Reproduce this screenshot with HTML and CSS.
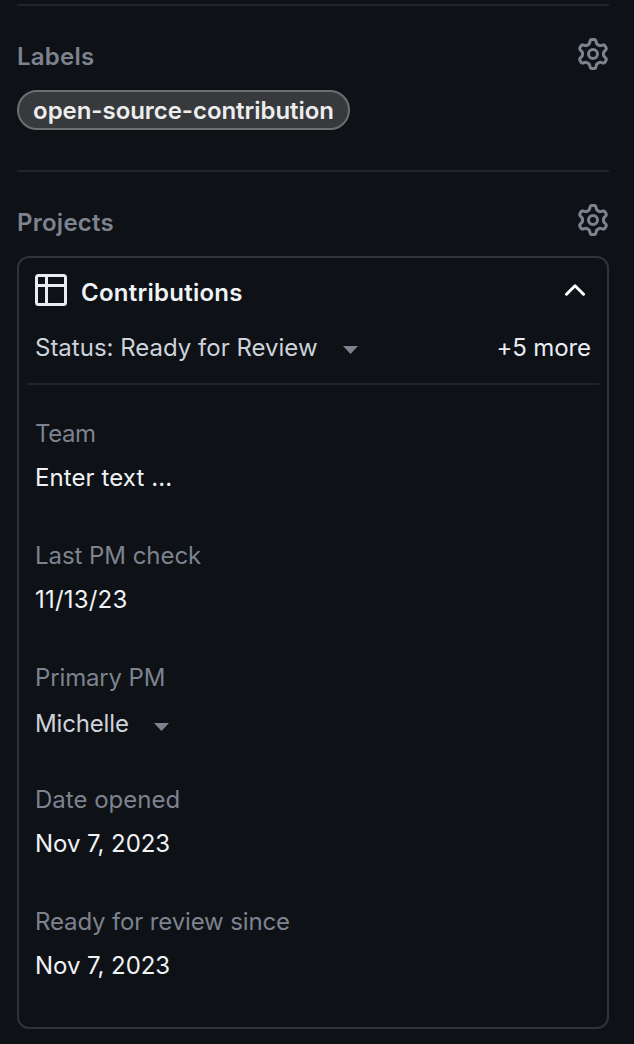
FILE: index.html
```html
<!DOCTYPE html>
<html lang="en">
<head>
<meta charset="utf-8">
<title>Sidebar</title>
<link rel="stylesheet" href="styles.css">
</head>
<body>
<svg class="sprite" aria-hidden="true">
  <symbol id="gear" viewBox="0 0 16 16"><path d="M8 0a8.2 8.2 0 0 1 .701.031C9.444.095 9.99.645 10.16 1.29l.288 1.107c.018.066.079.158.212.224.231.114.454.243.668.386.123.082.233.09.299.071l1.103-.303c.644-.176 1.392.021 1.82.63.27.385.506.792.704 1.218.315.675.111 1.422-.364 1.891l-.814.806c-.049.048-.098.147-.088.294.016.257.016.515 0 .772-.01.147.038.246.088.294l.814.806c.475.469.679 1.216.364 1.891a7.977 7.977 0 0 1-.704 1.217c-.428.61-1.176.807-1.82.63l-1.102-.302c-.067-.019-.177-.011-.3.071a5.909 5.909 0 0 1-.668.386c-.133.066-.194.158-.211.224l-.29 1.106c-.168.646-.715 1.196-1.458 1.26a8.006 8.006 0 0 1-1.402 0c-.743-.064-1.289-.614-1.458-1.26l-.289-1.106c-.018-.066-.079-.158-.212-.224a5.738 5.738 0 0 1-.668-.386c-.123-.082-.233-.09-.299-.071l-1.103.303c-.644.176-1.392-.021-1.82-.63a8.12 8.12 0 0 1-.704-1.218c-.315-.675-.111-1.422.363-1.891l.815-.806c.05-.048.098-.147.088-.294a6.214 6.214 0 0 1 0-.772c.01-.147-.038-.246-.088-.294l-.815-.806C.635 6.045.431 5.298.746 4.623a7.92 7.92 0 0 1 .704-1.217c.428-.61 1.176-.807 1.82-.63l1.102.302c.067.019.177.011.3-.071.214-.143.437-.272.668-.386.133-.066.194-.158.211-.224l.29-1.106C6.009.645 6.556.095 7.299.03 7.53.01 7.764 0 8 0Zm-.571 1.525c-.036.003-.108.036-.137.146l-.289 1.105c-.147.561-.549.967-.998 1.189-.173.086-.34.183-.5.29-.417.278-.97.423-1.529.27l-1.103-.303c-.109-.03-.175.016-.195.045-.22.312-.412.644-.573.99-.014.031-.021.11.059.19l.815.806c.411.406.562.957.53 1.456a4.709 4.709 0 0 0 0 .582c.032.499-.119 1.05-.53 1.456l-.815.806c-.081.08-.073.159-.059.19.162.346.353.677.573.989.02.03.085.076.195.046l1.102-.303c.56-.153 1.113-.008 1.53.27.161.107.328.204.501.29.447.222.85.629.997 1.189l.289 1.105c.029.109.101.143.137.146a6.6 6.6 0 0 0 1.142 0c.036-.003.108-.036.137-.146l.289-1.105c.147-.561.549-.967.998-1.189.173-.086.34-.183.5-.29.417-.278.97-.423 1.529-.27l1.103.303c.109.029.175-.016.195-.045.22-.313.411-.644.573-.99.014-.031.021-.11-.059-.19l-.815-.806c-.411-.406-.562-.957-.53-1.456a4.709 4.709 0 0 0 0-.582c-.032-.499.119-1.05.53-1.456l.815-.806c.081-.08.073-.159.059-.19a6.464 6.464 0 0 0-.573-.989c-.02-.03-.085-.076-.195-.046l-1.102.303c-.56.153-1.113.008-1.53-.27a4.44 4.44 0 0 0-.501-.29c-.447-.222-.85-.629-.997-1.189l-.289-1.105c-.029-.11-.101-.143-.137-.146a6.6 6.6 0 0 0-1.142 0ZM11 8a3 3 0 1 1-6 0 3 3 0 0 1 6 0ZM9.5 8a1.5 1.5 0 1 0-3.001.001A1.5 1.5 0 0 0 9.5 8Z"/></symbol>
</svg>
<aside class="sidebar">
  <section class="section section-labels">
    <header class="section-head">
      <h2 class="section-title">Labels</h2>
      <svg class="gear"><use href="#gear"/></svg>
    </header>
    <a class="label">open-source-contribution</a>
  </section>
  <section class="section">
    <header class="section-head">
      <h2 class="section-title">Projects</h2>
      <svg class="gear"><use href="#gear"/></svg>
    </header>
    <div class="card">
      <div class="card-head">
        <svg class="table-icon" viewBox="0 0 32 32"><rect x="1.5" y="1.5" width="29" height="29" rx="2"/><path d="M1.5 11.5h29M11.5 1.5v29"/></svg>
        <span class="card-title">Contributions</span>
        <svg class="chevron" viewBox="0 0 20 12"><path d="M1.5 10.2 10 1.8l8.500 8.400"/></svg>
      </div>
      <div class="status">
        <span class="status-text">Status: Ready for Review</span>
        <svg class="caret" viewBox="0 0 15 8"><path d="M0 0h15L7.500 8Z"/></svg>
        <span class="more">+5 more</span>
      </div>
      <dl class="fields">
        <div class="field"><dt class="name n-team">Team</dt><dd class="value v-text">Enter text ...</dd></div>
        <div class="field"><dt class="name n-check">Last PM check</dt><dd class="value v-check">11/13/23</dd></div>
        <div class="field"><dt class="name n-primary">Primary PM</dt><dd class="value select"><span>Michelle</span><svg class="caret" viewBox="0 0 15 8"><path d="M0 0h15L7.500 8Z"/></svg></dd></div>
        <div class="field"><dt class="name n-opened">Date opened</dt><dd class="value v-date">Nov 7, 2023</dd></div>
        <div class="field"><dt class="name n-since">Ready for review since</dt><dd class="value v-date">Nov 7, 2023</dd></div>
      </dl>
    </div>
  </section>
</aside>
</body>
</html>
```
FILE: styles.css
```css
* { box-sizing: border-box; }
body {
  margin: 0;
  background: #0e1116;
  color: #f0f3f6;
  font: 24px/36px Inter, "Liberation Sans", sans-serif;
}
h2, dl, dt, dd { margin: 0; font-size: inherit; }
svg { display: block; flex: none; }
.sprite { position: absolute; width: 0; height: 0; }
.sidebar { padding: 4px 25px 0 17px; white-space: nowrap; }
.section { border-top: 2px solid #21252b; padding-top: 32px; }
.section-labels { height: 166px; }
.section-head { display: flex; justify-content: space-between; height: 52px; }
.section-title { padding-top: 1px; color: #7d838e; font-weight: 600; letter-spacing: 0.25px; }
.gear { width: 32px; height: 32px; fill: #7d838e; }
.label {
  display: flex;
  align-items: center;
  justify-content: center;
  width: 333px;
  height: 40px;
  padding-top: 2px;
  border: 2px solid #6d6e70;
  border-radius: 20px;
  background: #37393d;
  color: #ededed;
  font-weight: 600;
  letter-spacing: -0.05px;
}
.card { height: 773px; padding: 16px 8px 0; border: 2px solid #303338; border-radius: 12px; }
.card-head { display: flex; align-items: center; height: 32px; padding: 0 14px 0 8px; }
.table-icon { width: 32px; height: 32px; margin-right: 14px; fill: none; stroke: #e9edf2; stroke-width: 3; }
.card-title { padding-top: 5px; font-weight: 600; letter-spacing: 0.25px; }
.chevron { width: 20px; height: 12px; margin-left: auto; fill: none; stroke: #fff; stroke-width: 3; stroke-linecap: round; stroke-linejoin: round; }
.status { display: flex; align-items: center; height: 79px; padding: 6px 8px 0; border-bottom: 2px solid #21252b; color: #cdd3da; }
.caret { width: 15px; height: 8px; margin: 5px 0 0 25px; fill: #7d838e; }
.more { margin-left: auto; color: #e9edf2; letter-spacing: -0.1px; }
.fields { padding: 31px 8px 0; }
.field { height: 122px; }
.name { color: #7d838e; }
.n-team { letter-spacing: -0.4px; }
.n-check { letter-spacing: -0.05px; }
.n-primary, .n-since { letter-spacing: -0.14px; }
.value { margin-top: 8px; }
.v-text { letter-spacing: 0.1px; }
.v-check { letter-spacing: 0.2px; }
.v-date { letter-spacing: -0.06px; }
.select { display: flex; align-items: center; padding-top: 2px; color: #cdd3da; letter-spacing: -0.16px; }
```
